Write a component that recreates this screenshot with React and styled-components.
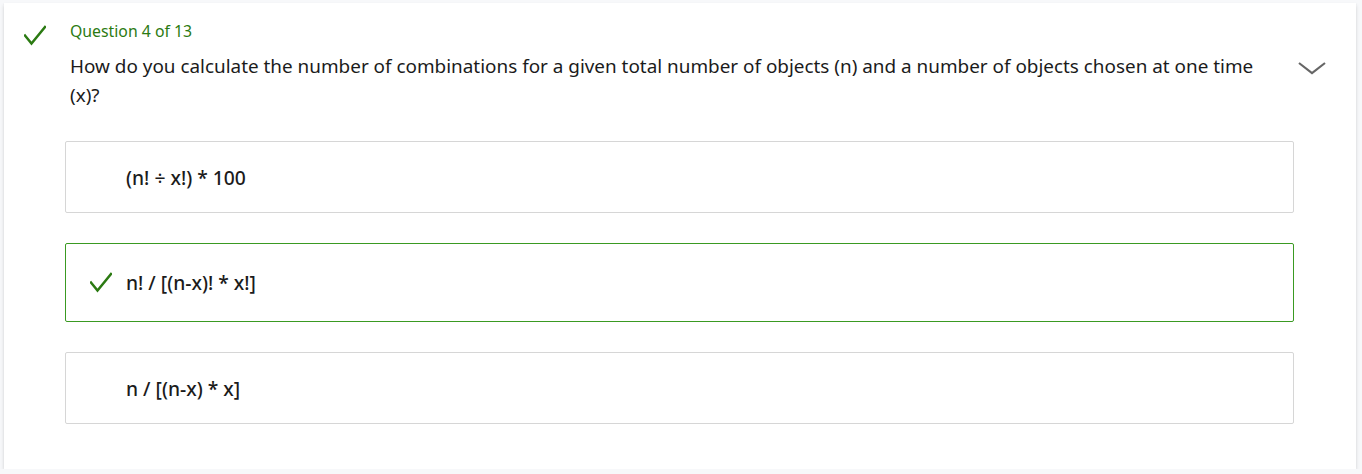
import styled, { createGlobalStyle } from 'styled-components';

const GlobalStyle = createGlobalStyle`
  html, body {
    margin: 0;
    background: #f7f8fa;
  }
  body {
    padding: 3px 6px 0 4px;
    font-family: "Segoe UI", "Noto Sans", "Open Sans", sans-serif;
    color: #1b1b1b;
  }
`;

const options = [
  { text: '(n! ÷ x!) * 100', correct: false },
  { text: 'n! / [(n-x)! * x!]', correct: true },
  { text: 'n / [(n-x) * x]', correct: false },
];

const Check = ({ size = 22 }) => (
  <svg width={size} height={size} viewBox="0 0 22 22" fill="none">
    <path d="M1 10.5 L7.5 18.5 L21 2" stroke="#2b7a12" strokeWidth="2.4" strokeLinecap="square" />
  </svg>
);

const Chevron = () => (
  <svg width="28" height="14" viewBox="0 0 28 14" fill="none">
    <path d="M1 2 L14 12 L27 2" stroke="#666" strokeWidth="2.2" />
  </svg>
);

const App = () => {
  return (
    <>
      <GlobalStyle />
      <Card>
        <IconCol>
          <Check />
        </IconCol>
        <Content>
          <Label>Question 4 of 13</Label>
          <QuestionRow>
            <QuestionText>
              How do you calculate the number of combinations for a given total number of objects (n) and a number of objects chosen at one time (x)?
            </QuestionText>
            <Toggle>
              <Chevron />
            </Toggle>
          </QuestionRow>
          <Options>
            {options.map((o) => (
              <Option key={o.text} $correct={o.correct}>
                <Mark>{o.correct && <Check />}</Mark>
                <OptionText>{o.text}</OptionText>
              </Option>
            ))}
          </Options>
        </Content>
      </Card>
    </>
  );
};

const Card = styled.div`
  box-sizing: border-box;
  width: 1352px;
  height: 466px;
  background: #fff;
  box-shadow: 0 1.6px 3.6px rgba(0, 0, 0, 0.16), 0 0.3px 0.9px rgba(0, 0, 0, 0.12);
  display: flex;
  padding: 18px 28px 0 20px;
`;

const IconCol = styled.div`
  width: 46px;
  flex-shrink: 0;
  padding-top: 4px;
`;

const Content = styled.div`
  flex: 1;
  display: flex;
  flex-direction: column;
`;

const Label = styled.div`
  font-size: 15.8px;
  line-height: 20px;
  color: #2b7a12;
`;

const QuestionRow = styled.div`
  display: flex;
  align-items: flex-start;
  margin-top: 11px;
`;

const QuestionText = styled.div`
  flex: 1;
  font-size: 18.9px;
  line-height: 29px;
  padding-right: 40px;
`;

const Toggle = styled.div`
  width: 30px;
  padding-top: 6px;
  flex-shrink: 0;
`;

const Options = styled.div`
  display: flex;
  flex-direction: column;
  gap: 30px;
  margin: 31px 34px 0 -5px;
`;

const Option = styled.div`
  display: flex;
  align-items: center;
  height: ${(p) => (p.$correct ? '79px' : '72px')};
  box-sizing: border-box;
  border: 1px solid ${(p) => (p.$correct ? '#3a9a22' : '#d6d6d6')};
  border-radius: 2px;
  padding-left: 24px;
`;

const Mark = styled.div`
  width: 36px;
  display: flex;
  align-items: center;
`;

const OptionText = styled.span`
  font-size: 19.3px;
  font-weight: 500;
`;

export default App;
